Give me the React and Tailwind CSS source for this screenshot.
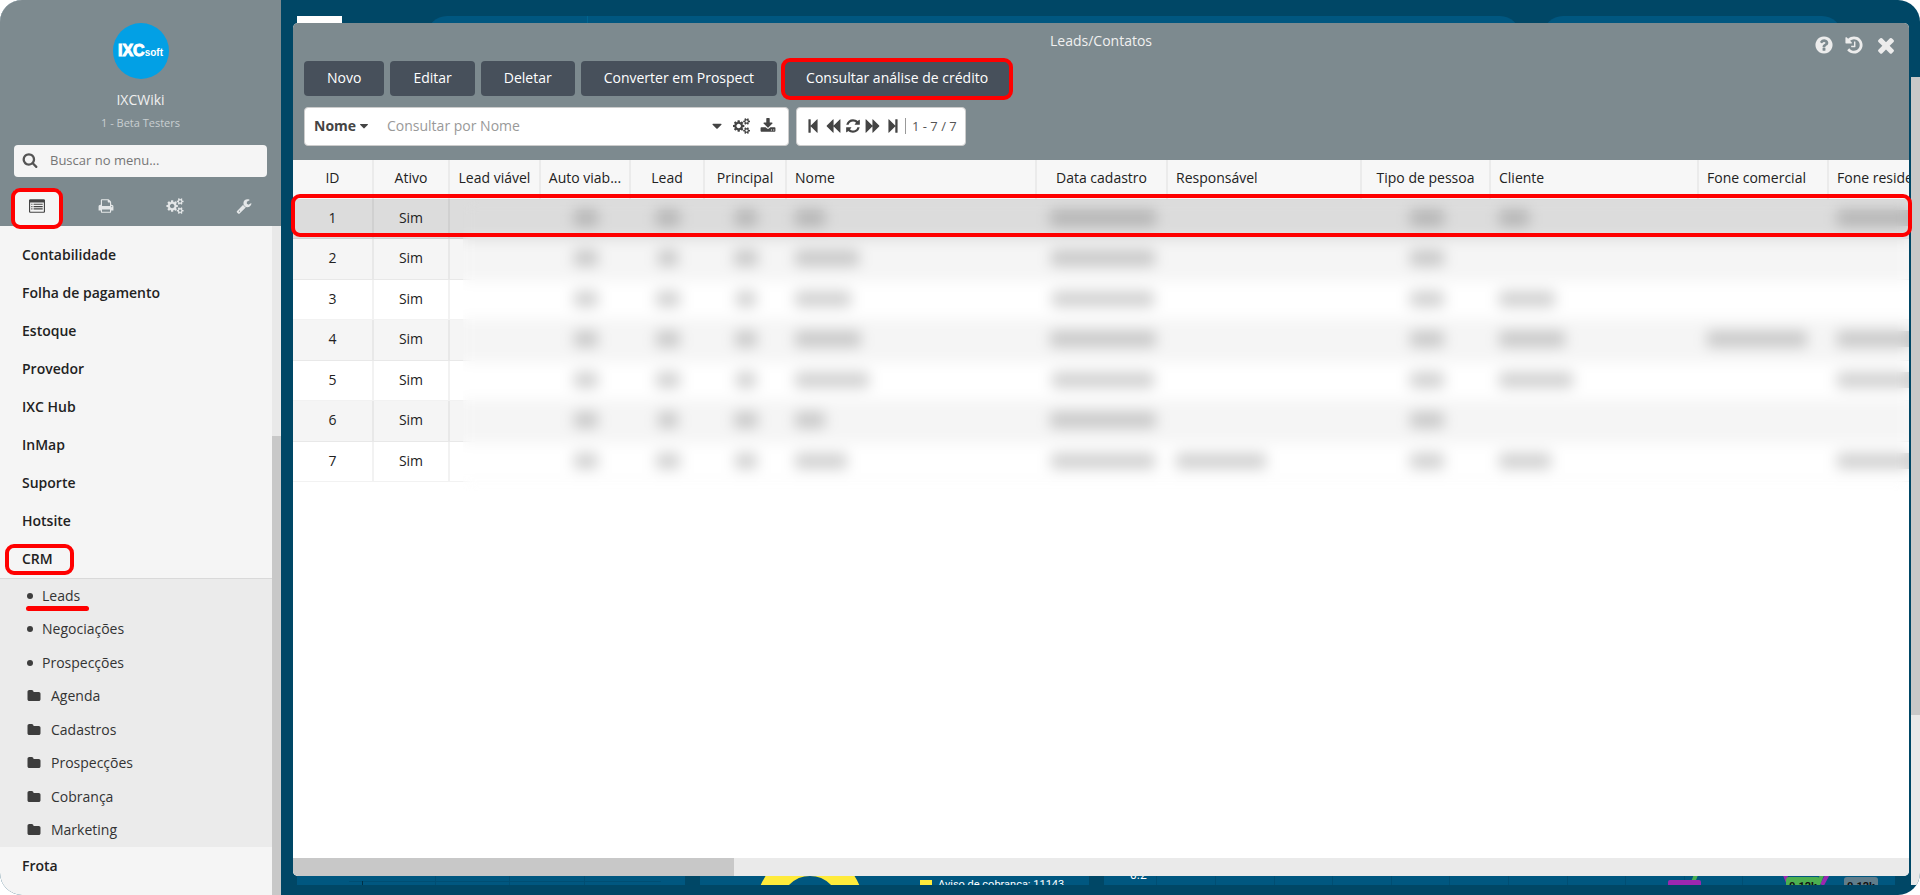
import React, { useState } from 'react'

const PATHS = {
  search: 'M1216 832q0-185-131.5-316.5t-316.5-131.5-316.5 131.5-131.5 316.5 131.5 316.5 316.5 131.5 316.5-131.5 131.5-316.5zm512 832q0 52-38 90t-90 38q-54 0-90-38l-343-342q-179 124-399 124-143 0-273.5-55.5t-225-150-150-225-55.5-273.5 55.5-273.5 150-225 225-150 273.5-55.5 273.5 55.5 225 150 150 225 55.5 273.5q0 220-124 399l343 343q37 37 37 90z',
  print: 'M448 1536h896v-256h-896v256zm0-640h896v-384h-160q-40 0-68-28t-28-68v-160h-640v640zm1152 64q0-26-19-45t-45-19-45 19-19 45 19 45 45 19 45-19 19-45zm128 0v416q0 13-9.5 22.5t-22.5 9.5h-224v160q0 40-28 68t-68 28h-960q-40 0-68-28t-28-68v-160h-224q-13 0-22.5-9.5t-9.5-22.5v-416q0-79 56.5-135.5t135.5-56.5h64v-544q0-40 28-68t68-28h672q40 0 88 20t76 48l152 152q28 28 48 76t20 88v256h64q79 0 135.5 56.5t56.5 135.5z',
  wrench: 'M448 1472q0-26-19-45t-45-19-45 19-19 45 19 45 45 19 45-19 19-45zm644-420l-682 682q-37 37-90 37-52 0-91-37l-106-108q-38-36-38-90 0-53 38-91l681-681q39 98 114.5 173.5t173.5 114.5zm634-435q0 39-23 106-47 134-164.5 217.5t-258.5 83.5q-185 0-316.5-131.5t-131.5-316.5 131.5-316.5 316.5-131.5q58 0 121.5 16.5t107.5 46.5q16 11 16 28t-16 28l-293 169v224l193 107q5-3 79-48.5t135.5-81 70.5-35.5q15 0 23.5 10t8.5 25z',
  cogs: 'M896 896q0-106-75-181t-181-75-181 75-75 181 75 181 181 75 181-75 75-181zm768 512q0-52-38-90t-90-38-90 38-38 90q0 53 37.5 90.5t90.5 37.5 90.5-37.5 37.5-90.5zm0-1024q0-52-38-90t-90-38-90 38-38 90q0 53 37.5 90.5t90.5 37.5 90.5-37.5 37.5-90.5zm-384 421v185q0 10-7 19.5t-16 10.5l-155 24q-11 35-32 76 34 48 90 115 7 11 7 20 0 12-7 19-23 30-82.5 89.5t-78.5 59.5q-11 0-21-7l-115-90q-37 19-77 31-11 108-23 155-7 24-30 24h-186q-11 0-20-7.5t-10-17.5l-23-153q-34-10-75-31l-118 89q-7 7-20 7-11 0-21-8-144-133-144-160 0-9 7-19 10-14 41-53t47-61q-23-44-35-82l-152-24q-10-1-17-9.5t-7-19.5v-185q0-10 7-19.5t16-10.5l155-24q11-35 32-76-34-48-90-115-7-11-7-20 0-12 7-20 22-30 82-89t79-59q11 0 21 7l115 90q34-18 77-32 11-108 23-154 7-24 30-24h186q11 0 20 7.5t10 17.5l23 153q34 10 75 31l118-89q8-7 20-7 11 0 21 8 144 133 144 160 0 8-7 19-12 16-42 54t-45 60q23 48 34 82l152 23q10 2 17 10.5t7 19.5zm640 533v140q0 16-149 31-12 27-30 52 51 113 51 138 0 4-4 7-122 71-124 71-8 0-46-47t-52-68q-20 2-30 2t-30-2q-14 21-52 68t-46 47q-2 0-124-71-4-3-4-7 0-25 51-138-18-25-30-52-149-15-149-31v-140q0-16 149-31 13-29 30-52-51-113-51-138 0-4 4-7 4-2 35-20t59-34 30-16q8 0 46 46.5t52 67.5q20-2 30-2t30 2q51-71 92-112l6-2q4 0 124 70 4 3 4 7 0 25-51 138 17 23 30 52 149 15 149 31zm0-1024v140q0 16-149 31-12 27-30 52 51 113 51 138 0 4-4 7-122 71-124 71-8 0-46-47t-52-68q-20 2-30 2t-30-2q-14 21-52 68t-46 47q-2 0-124-71-4-3-4-7 0-25 51-138-18-25-30-52-149-15-149-31v-140q0-16 149-31 13-29 30-52-51-113-51-138 0-4 4-7 4-2 35-20t59-34 30-16q8 0 46 46.5t52 67.5q20-2 30-2t30 2q51-71 92-112l6-2q4 0 124 70 4 3 4 7 0 25-51 138 17 23 30 52 149 15 149 31z',
  folder: 'M1728 608v704q0 92-66 158t-158 66h-1216q-92 0-158-66t-66-158v-960q0-92 66-158t158-66h320q92 0 158 66t66 158v32h672q92 0 158 66t66 158z',
  help: 'M1024 1376v-192q0-14-9-23t-23-9h-192q-14 0-23 9t-9 23v192q0 14 9 23t23 9h192q14 0 23-9t9-23zm256-672q0-88-55.5-163t-138.5-116-170-41q-243 0-371 213-15 24 8 42l132 100q7 6 19 6 16 0 25-12 53-68 86-92 34-24 86-24 48 0 85.5 26t37.5 59q0 38-20 61t-68 45q-63 28-115.5 86.5t-52.5 125.5v36q0 14 9 23t23 9h192q14 0 23-9t9-23q0-19 21.5-49.5t54.5-49.5q32-18 49-28.5t46-35 44.5-48 28-60.5 12.5-81zm384 192q0 209-103 385.5t-279.5 279.5-385.5 103-385.5-103-279.5-279.5-103-385.5 103-385.5 279.5-279.5 385.5-103 385.5 103 279.5 279.5 103 385.5z',
  history: 'M1664 896q0 156-61 298t-164 245-245 164-298 61q-172 0-327-72.5t-264-204.5q-7-10-6.5-22.5t8.5-20.5l137-138q10-9 25-9 16 2 23 12 73 95 179 147t225 52q104 0 198.5-40.5t163.5-109.5 109.5-163.5 40.5-198.5-40.5-198.5-109.5-163.5-163.5-109.5-198.5-40.5q-98 0-188 35.5t-160 101.5l137 138q31 30 14 69-17 40-59 40h-448q-26 0-45-19t-19-45v-448q0-42 40-59 39-17 69 14l130 129q107-101 244.5-156.5t284.5-55.5q156 0 298 61t245 164 164 245 61 298zm-640-288v448q0 14-9 23t-23 9h-320q-14 0-23-9t-9-23v-64q0-14 9-23t23-9h224v-352q0-14 9-23t23-9h64q14 0 23 9t9 23z',
  times: 'M1490 1322q0 40-28 68l-136 136q-28 28-68 28t-68-28l-294-294-294 294q-28 28-68 28t-68-28l-136-136q-28-28-28-68t28-68l294-294-294-294q-28-28-28-68t28-68l136-136q28-28 68-28t68 28l294 294 294-294q28-28 68-28t68 28l136 136q28 28 28 68t-28 68l-294 294 294 294q28 28 28 68z',
  caret: 'M1408 704q0 26-19 45l-448 448q-19 19-45 19t-45-19l-448-448q-19-19-19-45t19-45 45-19h896q26 0 45 19t19 45z',
  download: 'M1344 1344q0-26-19-45t-45-19-45 19-19 45 19 45 45 19 45-19 19-45zm256 0q0-26-19-45t-45-19-45 19-19 45 19 45 45 19 45-19 19-45zm128-224v320q0 40-28 68t-68 28h-1472q-40 0-68-28t-28-68v-320q0-40 28-68t68-28h465l135 136q58 56 136 56t136-56l136-136h464q40 0 68 28t28 68zm-325-569q17 41-14 70l-448 448q-18 19-45 19t-45-19l-448-448q-31-29-14-70 17-39 59-39h256v-448q0-26 19-45t45-19h256q26 0 45 19t19 45v448h256q42 0 59 39z',
  refresh: 'M1639 1056q0 5-1 7-64 268-268 434.5t-478 166.5q-146 0-282.5-55t-243.5-157l-129 129q-19 19-45 19t-45-19-19-45v-448q0-26 19-45t45-19h448q26 0 45 19t19 45-19 45l-137 137q71 66 161 102t187 36q134 0 250-65t186-179q11-17 53-117 8-23 30-23h192q13 0 22.5 9.5t9.5 22.5zm25-800v448q0 26-19 45t-45 19h-448q-26 0-45-19t-19-45 19-45l138-138q-148-137-349-137-134 0-250 65t-186 179q-11 17-53 117-8 23-30 23h-199q-13 0-22.5-9.5t-9.5-22.5v-7q65-268 270-434.5t480-166.5q146 0 284 55.5t245 156.5l130-129q19-19 45-19t45 19 19 45z',
  backward: 'M1683 141q19-19 32-13t13 32v1472q0 26-13 32t-32-13l-710-710q-9-9-13-19v710q0 26-13 32t-32-13l-710-710q-19-19-19-45t19-45l710-710q19-19 32-13t13 32v710q4-10 13-19z',
  stepBackward: 'M1363 141q19-19 32-13t13 32v1472q0 26-13 32t-32-13l-710-710q-9-9-13-19v678q0 26-19 45t-45 19h-128q-26 0-45-19t-19-45v-1408q0-26 19-45t45-19h128q26 0 45 19t19 45v678q4-10 13-19z',
  listAlt: 'M0 288q0-66 47-113t113-47h1472q66 0 113 47t47 113v1216q0 66-47 113t-113 47h-1472q-66 0-113-47t-47-113zM128 512v960q0 64 64 64h1408q64 0 64-64v-960zM256 640h128v128h-128zM512 640h1024v128h-1024zM256 896h128v128h-128zM512 896h1024v128h-1024zM256 1152h128v128h-128zM512 1152h1024v128h-1024z',
}

const MENU = ['Contabilidade', 'Folha de pagamento', 'Estoque', 'Provedor', 'IXC Hub', 'InMap', 'Suporte', 'Hotsite', 'CRM']

const SUBMENU = [
  { label: 'Leads' },
  { label: 'Negociações' },
  { label: 'Prospecções' },
  { label: 'Agenda', folder: true },
  { label: 'Cadastros', folder: true },
  { label: 'Prospecções', folder: true },
  { label: 'Cobrança', folder: true },
  { label: 'Marketing', folder: true },
]

const TABS = [
  { icon: 'listAlt', label: 'Menu' },
  { icon: 'print', label: 'Relatórios' },
  { icon: 'cogs', label: 'Configurações' },
  { icon: 'wrench', label: 'Ferramentas' },
]

const COLUMNS = [
  { label: 'ID', width: 81, center: true },
  { label: 'Ativo', width: 76, center: true },
  { label: 'Lead viável', width: 91, center: true },
  { label: 'Auto viab...', width: 90, center: true },
  { label: 'Lead', width: 74, center: true },
  { label: 'Principal', width: 82, center: true },
  { label: 'Nome', width: 250 },
  { label: 'Data cadastro', width: 131, center: true },
  { label: 'Responsável', width: 194 },
  { label: 'Tipo de pessoa', width: 129, center: true },
  { label: 'Cliente', width: 208 },
  { label: 'Fone comercial', width: 130 },
  { label: 'Fone residencial', width: 200 },
]

// hidden columns keep only the length of their value
const ROWS = [
  { id: 1, masked: [0, 24, 24, 22, 30, 106, 0, 34, 30, 0, 110] },
  { id: 2, masked: [0, 24, 20, 24, 64, 104, 0, 34, 0, 0, 0] },
  { id: 3, masked: [0, 24, 24, 20, 56, 102, 0, 34, 56, 0, 0] },
  { id: 4, masked: [0, 24, 24, 22, 66, 106, 0, 34, 66, 100, 110] },
  { id: 5, masked: [0, 24, 24, 20, 74, 102, 0, 34, 74, 0, 110] },
  { id: 6, masked: [0, 24, 20, 24, 30, 106, 0, 34, 0, 0, 0] },
  { id: 7, masked: [0, 24, 24, 22, 52, 104, 90, 34, 52, 0, 110] },
]

function Icon({ name, className }) {
  return (
    <svg viewBox={name === 'cogs' ? '0 0 1920 1792' : '0 0 1792 1792'} fill="currentColor" fillRule="evenodd" className={className} aria-hidden="true">
      <path d={PATHS[name]} />
    </svg>
  )
}

export default function App() {
  return (
    <div className="h-screen bg-white">
      <div className="flex h-full overflow-hidden rounded-[22px] bg-[#004766] font-['Open_Sans',sans-serif] text-[14px] leading-5 text-[#222]">
        <Sidebar />
        <main className="relative flex min-w-0 flex-1 pt-[23px] pr-[11px] pb-[19px] pl-3">
          <Backdrop />
          <LeadsWindow />
        </main>
      </div>
    </div>
  )
}

function Sidebar() {
  const [tab, setTab] = useState('listAlt')

  return (
    <aside className="flex w-[281px] shrink-0 flex-col bg-[#f5f5f5]">
      <div className="flex flex-col items-center bg-[#7d8a8f] px-[14px] pt-[23px]">
        <div className="flex size-14 items-center justify-center rounded-full bg-[#02a0e5] font-['Liberation_Sans',sans-serif] leading-4 font-bold text-white">
          <span className="text-[16px] [-webkit-text-stroke:1px_white]">IXC</span>
          <span className="pt-1 text-[10px]">soft</span>
        </div>
        <p className="mt-[11px] text-[#f0f0f0]">IXCWiki</p>
        <p className="mt-1 text-[11px] leading-[18px] text-[#c9cfd1]">1 - Beta Testers</p>
        <label className="mt-[13px] flex h-8 w-full items-center gap-3 rounded-[4px] bg-[#f5f5f5] px-2 pb-[2px]">
          <Icon name="search" className="size-4 text-[#555]" />
          <input
            type="text"
            aria-label="Buscar no menu"
            placeholder="Buscar no menu..."
            className="min-w-0 flex-1 bg-transparent text-[13px] outline-none placeholder:text-[#757575]"
          />
        </label>
        <div className="mt-[13px] flex h-9 w-full justify-between">
          {TABS.map(t => (
            <button
              key={t.icon}
              aria-label={t.label}
              onClick={() => setTab(t.icon)}
              className={`relative flex w-[46px] items-center justify-center pb-1 ${
                tab === t.icon ? 'bg-[#f5f5f5] text-[#444]' : 'text-[#e4e7e8]'
              }`}
            >
              <Icon name={t.icon} className={t.icon === 'cogs' ? 'h-4 w-[18px]' : 'size-4'} />
              {t.icon === 'listAlt' && <Highlight className="-inset-x-[3px] -top-[2px] -bottom-[3px]" />}
            </button>
          ))}
        </div>
      </div>

      <div className="flex min-h-0 flex-1">
        <nav className="min-w-0 flex-1 overflow-hidden pt-[10px]">
          {MENU.map(item => (
            <a key={item} href="#" className="relative flex h-[38px] items-center px-[22px] font-semibold">
              {item}
              {item === 'CRM' && <Highlight className="top-1 bottom-[3px] left-[5px] w-[69px]" />}
            </a>
          ))}
          <ul className="flex h-[269px] flex-col border-t border-[#d9d9d9] bg-[#ebebeb] text-[#333]">
            {SUBMENU.map((item, i) => (
              <li key={i} className="flex-1">
                <a href="#" className="relative flex h-full items-center px-[27px]">
                  {item.folder
                    ? <Icon name="folder" className="mr-[10px] size-[14px] text-[#3d3d3d]" />
                    : <span className="mr-[9px] size-[6px] rounded-full bg-[#3d3d3d]" />}
                  {item.label}
                  {item.label === 'Leads' && <span className="absolute bottom-[2px] left-[26px] h-[5px] w-[63px] rounded-full bg-[#f00]" />}
                </a>
              </li>
            ))}
          </ul>
          <a href="#" className="flex h-[38px] items-center px-[22px] font-semibold">Frota</a>
        </nav>
        <div className="flex w-[9px] flex-col bg-[#e9e9e9]">
          <div className="mt-[210px] flex-1 bg-[#c8c8c8]" />
        </div>
      </div>
    </aside>
  )
}

function Highlight({ className }) {
  return <span className={`pointer-events-none absolute rounded-[9px] border-4 border-[#f00] ${className}`} />
}

function LeadsWindow() {
  return (
    <section className="relative flex min-w-0 flex-1 flex-col">
      <div className="flex min-h-0 flex-1 flex-col overflow-hidden rounded-[5px] bg-white">
        <header className="h-[137px] shrink-0 bg-[#7d8a8f] px-[11px]">
          <div className="relative flex h-[38px] items-start justify-center pt-2">
            <h1 className="text-[#f0f0f0]">Leads/Contatos</h1>
            <div className="absolute top-[10px] right-0 flex items-center gap-[10px] text-[#ececec]">
              <button aria-label="Ajuda"><Icon name="help" className="size-5" /></button>
              <button aria-label="Histórico"><Icon name="history" className="size-5" /></button>
              <button aria-label="Fechar"><Icon name="times" className="size-6" /></button>
            </div>
          </div>
          <div className="flex gap-[6px] text-white">
            <ToolButton>Novo</ToolButton>
            <ToolButton>Editar</ToolButton>
            <ToolButton>Deletar</ToolButton>
            <ToolButton>Converter em Prospect</ToolButton>
            <div className="relative">
              <ToolButton>Consultar análise de crédito</ToolButton>
              <Highlight className="-inset-x-[2px] -top-[3px] -bottom-1" />
            </div>
          </div>
          <SearchBar />
        </header>
        <LeadsTable />
        <div className="h-[18px] shrink-0 bg-[#eaeaea]">
          <div className="h-full w-[27.3%] bg-[#c8c8c8]" />
        </div>
      </div>
      <Highlight className="top-[171px] -right-[3px] -left-[2px] h-[43px]" />
    </section>
  )
}

function ToolButton({ children }) {
  return <button className="h-[35px] rounded-[4px] bg-[#47505b] px-[23px] pb-[2px]">{children}</button>
}

function SearchBar() {
  return (
    <div className="mt-[11px] flex gap-[7px] text-[#444]">
      <div className="flex h-[39px] w-[485px] items-center rounded-[4px] border border-[#ccc] bg-white pr-3 pb-[2px] pl-[9px]">
        <select aria-label="Campo de busca" className="appearance-none bg-transparent font-bold outline-none">
          <option>Nome</option>
        </select>
        <Icon name="caret" className="size-[14px]" />
        <input
          type="text"
          aria-label="Consultar por Nome"
          placeholder="Consultar por Nome"
          className="ml-4 min-w-0 flex-1 outline-none placeholder:text-[#999]"
        />
        <button aria-label="Opções"><Icon name="caret" className="size-4" /></button>
        <button aria-label="Filtros" className="ml-2"><Icon name="cogs" className="h-4 w-[17px]" /></button>
        <button aria-label="Exportar" className="ml-[10px]"><Icon name="download" className="size-4" /></button>
      </div>
      <div className="flex h-[39px] items-center gap-1 rounded-[4px] border border-[#ccc] bg-white px-2 pb-[2px]">
        <button aria-label="Primeira página"><Icon name="stepBackward" className="size-4" /></button>
        <button aria-label="Página anterior"><Icon name="backward" className="size-4" /></button>
        <button aria-label="Atualizar"><Icon name="refresh" className="size-4" /></button>
        <button aria-label="Próxima página"><Icon name="backward" className="size-4 -scale-x-100" /></button>
        <button aria-label="Última página"><Icon name="stepBackward" className="size-4 -scale-x-100" /></button>
        <span className="h-4 border-l border-[#999]" />
        <span className="pl-[2px] text-[13px] text-[#555]">1 - 7 / 7</span>
      </div>
    </div>
  )
}

function LeadsTable() {
  return (
    <div className="relative min-h-0 flex-1 overflow-hidden">
      <table className="w-[1736px] table-fixed border-separate border-spacing-0">
        <colgroup>
          {COLUMNS.map(c => <col key={c.label} style={{ width: c.width }} />)}
        </colgroup>
        <thead>
          <tr className="h-[39px] bg-[#f7f7f7]">
            {COLUMNS.map(c => (
              <th
                key={c.label}
                className={`border-r-2 border-[#ebebeb] pb-[3px] font-normal whitespace-nowrap ${c.center ? 'text-center' : 'px-2 text-left'}`}
              >
                {c.label}
              </th>
            ))}
          </tr>
        </thead>
        <tbody>
          {ROWS.map(row => (
            <tr
              key={row.id}
              className={`odd:h-10 even:h-[41px] ${row.id === 1 ? 'bg-[#dcdcdc]' : 'odd:bg-white even:bg-[#f5f5f5]'}`}
            >
              <td className="border-r-2 border-b border-black/5 pb-[2px] text-center">{row.id}</td>
              <td className="border-r-2 border-b border-black/5 pb-[2px] text-center">Sim</td>
              {row.masked.map((w, i) => (
                <td key={i} className={`border-b border-black/5 pb-[2px] ${COLUMNS[i + 2].center ? '' : 'px-2'}`}>
                  {w > 0 && (
                    <div
                      className={`h-4 rounded-[3px] bg-black/18 ${COLUMNS[i + 2].center ? 'mx-auto' : ''}`}
                      style={{ width: w }}
                    />
                  )}
                </td>
              ))}
            </tr>
          ))}
        </tbody>
      </table>
      {/* privacy blur over everything past the "Ativo" column */}
      <div className="absolute top-[39px] right-0 left-[170px] h-[292px] backdrop-blur-[7px]" />
    </div>
  )
}

// dashboard that shows round the edges of the open window
function Backdrop() {
  return (
    <div className="pointer-events-none absolute inset-0 text-white">
      <div className="absolute top-4 left-4 h-4 w-[45px] bg-white" />
      <div className="absolute top-4 right-[400px] left-[146px] h-10 rounded-[20px] bg-[#005780]">
        <div className="ml-40 h-full w-px bg-[#006590]" />
      </div>
      <div className="absolute top-4 right-[78px] left-[1262px] h-10 rounded-[20px] bg-[#005780]" />

      <div className="absolute right-[25px] bottom-[10px] left-4 flex h-[25px] gap-[15px] overflow-hidden">
        <div className="w-[388px] bg-[#005780]">
          <svg viewBox="0 0 388 25" className="h-[25px] w-[388px]" fill="none">
            <path d="M52 21.5H364M138.5 16V25M212.5 16V25M287.5 16V25" stroke="#004e73" />
            <path d="M65.5 21V25" stroke="#002f45" />
          </svg>
        </div>
        <div className="flex w-[389px] bg-[#005780]">
          <svg viewBox="0 0 200 25" className="h-[25px] w-[200px]" fill="none">
            <circle cx="110" cy="45" r="41" stroke="#ffeb3b" strokeWidth="24" />
          </svg>
          <div className="ml-5 flex gap-[6px] pt-[19px] font-['Roboto',sans-serif] text-[11px] leading-3 whitespace-nowrap">
            <span className="mt-px h-3 w-3 bg-[#ffeb3b]" />
            Aviso de cobrança: 11143
          </div>
        </div>
        <div className="flex flex-1 bg-[#005780] pl-[26px] font-['Roboto',sans-serif] text-[12px] leading-3">
          <span className="pt-[9px]">0.2</span>
          <svg viewBox="0 0 740 25" className="ml-auto h-[25px] w-[740px]">
            <path d="M1.500 0V25M60.500 0V25M119.500 0V25M177.500 0V25M236.500 0V25M294.500 0V25M353.500 0V25M412.500 0V25M470.500 0V25M529.500 0V25M587.500 0V25" stroke="#004e73" fill="none" />
            <path d="M537 25L542 12" stroke="#4caf50" strokeWidth="4" />
            <rect x="513" y="20" width="33" height="12" rx="2" fill="#9c27b0" />
            <path d="M628 10L634 25M675 10L667 25" stroke="#9c27b0" strokeWidth="4" />
            <path d="M669 10L663 25" stroke="#4caf50" strokeWidth="4" />
            <rect x="631" y="17" width="34" height="16" rx="3" fill="#4caf50" />
            <rect x="689" y="17" width="34" height="16" rx="3" fill="#607d8b" />
            <text x="648" y="30" textAnchor="middle" fontSize="11" fontWeight="700" fill="#111">0.12k</text>
            <text x="706" y="30" textAnchor="middle" fontSize="11" fontWeight="700" fill="#111">0.12k</text>
          </svg>
        </div>
      </div>

      <div className="absolute top-[77px] right-0 bottom-[10px] w-[9px] bg-[#e9e9e9]">
        <div className="h-[79%] bg-[#c8c8c8]" />
      </div>
    </div>
  )
}
